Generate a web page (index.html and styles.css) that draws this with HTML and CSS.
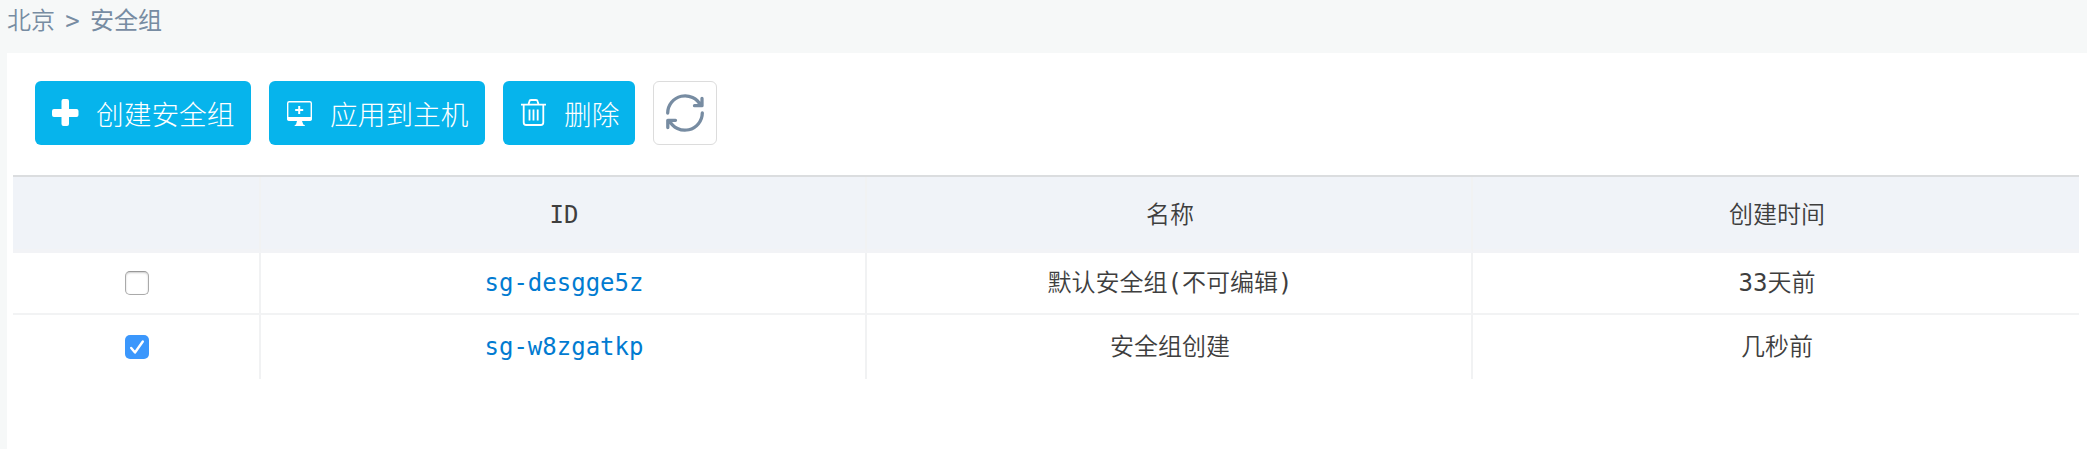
FILE: index.html
```html
<!DOCTYPE html>
<html lang="zh-CN">
<head>
<meta charset="utf-8">
<title>安全组</title>
<link rel="stylesheet" href="styles.css">
</head>
<body>
<nav class="breadcrumb"><span class="crumb">北京</span><span class="sep">&gt;</span><span class="crumb current">安全组</span></nav>
<main class="panel">
  <div class="toolbar">
    <button class="btn btn-create"><svg class="icon" viewBox="0 0 28 28" width="28" height="28"><path d="M12.500 0h3.500q2 0 2 2v8h7.500q2 0 2 2v4q0 2-2 2H18v7q0 2-2 2h-3.500q-2 0-2-2v-7H3q-2 0-2-2v-4q0-2 2-2h7.500V2q0-2 2-2z" fill="#fff"/></svg><span>创建安全组</span></button>
    <button class="btn btn-apply"><svg class="icon" viewBox="0 0 28 28" width="28" height="28"><rect x="2.700" y="2.700" width="23.600" height="18" rx="1.500" fill="none" stroke="#fff" stroke-width="1.400"/><path d="M2 18h25v2q0 2-2 2H4q-2 0-2-2zM12 22h5l1.300 3.500q1.700.2 1.700 1.500H9.500q0-1.300 1.500-1.500z" fill="#fff"/><path d="M14.200 7v8M10.200 11h8" stroke="#fff" stroke-width="2"/></svg><span>应用到主机</span></button>
    <button class="btn btn-delete"><svg class="icon" viewBox="0 0 28 28" width="28" height="28" fill="none" stroke="#fff" stroke-width="1.800"><path d="M2 5.700h25M4.700 6V23.500q0 2.500 2.500 2.500h14.600q2.500 0 2.500-2.500V6M9.500 5.500l.8-3q.3-1.500 1.700-1.500h5q1.400 0 1.700 1.500l.8 3M10.500 10.500v11M14.500 10.500v11M18.700 10.500v11"/></svg><span>删除</span></button>
    <button class="btn-refresh" aria-label="刷新"><svg viewBox="0 0 40 40" width="40" height="40" fill="none" stroke="#778ca2" stroke-width="3.300" stroke-linecap="round" stroke-linejoin="round"><path d="M2.700 20a17.400 17.400 0 0 1 33-7.500M37.300 20a17.400 17.400 0 0 1-33 7.500M37 5.500V12.700H29.500M2.800 34.500V27.300H10.500"/></svg></button>
  </div>
  <table class="grid">
    <colgroup><col class="col-check"><col class="col-id"><col class="col-name"><col class="col-time"></colgroup>
    <thead><tr><th></th><th>ID</th><th>名称</th><th>创建时间</th></tr></thead>
    <tbody>
      <tr class="first"><td><span class="check"></span></td><td><a class="link">sg-desgge5z</a></td><td>默认安全组(不可编辑)</td><td>33天前</td></tr>
      <tr class="second"><td><span class="check checked"><svg viewBox="0 0 24 24" width="24" height="24"><path d="M6.200 13l3.800 4.500L17.800 6.500" fill="none" stroke="#fff" stroke-width="2.400" stroke-linecap="round" stroke-linejoin="round"/></svg></span></td><td><a class="link">sg-w8zgatkp</a></td><td>安全组创建</td><td>几秒前</td></tr>
    </tbody>
  </table>
</main>
</body>
</html>
```
FILE: styles.css
```css
* { box-sizing: border-box; }
body {
  margin: 0;
  height: 449px;
  overflow: hidden;
  display: flex;
  flex-direction: column;
  background: #f6f8f8;
  color: #3e3e3e;
  font: 350 24px/36px "DejaVu Sans Mono", "Noto Sans CJK SC", monospace;
}
.breadcrumb {
  height: 53px;
  padding: 3px 0 0 7px;
  display: flex;
  color: #778ca2;
}
.sep { width: 35px; text-align: center; }
.current { font-weight: 400; }
.panel {
  flex: 1;
  margin-left: 7px;
  padding: 28px 8px 0 6px;
  background: #fff;
}
.toolbar { display: flex; gap: 18px; margin: 0 0 30px 22px; }
.btn {
  height: 64px;
  padding: 0 16px;
  display: flex;
  align-items: center;
  border: 0;
  border-radius: 6px;
  background: #06b4ec;
  color: #fff;
  font: 300 27.700px/40px "DejaVu Sans Mono", "Noto Sans CJK SC", monospace;
  white-space: nowrap;
}
.btn span { margin: 6px 0 0 17px; }
.btn-create, .btn-apply { width: 216px; }
.btn-delete { width: 132px; }
.icon { display: block; flex: none; }
.btn-refresh {
  width: 64px;
  height: 64px;
  padding: 0;
  display: grid;
  place-items: center;
  border: 1px solid #dcdcdc;
  border-radius: 6px;
  background: #fff;
}
.grid {
  width: 2066px;
  table-layout: fixed;
  border-collapse: separate;
  border-spacing: 0;
  border-top: 2px solid #dbdddf;
}
.col-check { width: 248px; }
.col-id, .col-name, .col-time { width: 606px; }
th, td {
  padding: 0 0 0 2px;
  text-align: center;
  vertical-align: middle;
  font-weight: 350;
}
th:not(:last-child), td:not(:last-child) { border-right: 2px solid #f1f2f3; }
th { height: 78px; padding-top: 3px; background: #f0f3f8; border-bottom: 4px solid #f2f3f6; }
thead th { height: 76px; }
.first td { height: 62px; border-bottom: 2px solid #f2f3f4; }
.second td { height: 64px; }
.link { color: #017bd1; }
.check {
  display: block;
  width: 24px;
  height: 24px;
  margin: 0 auto;
  border: 1px solid #aaa;
  border-top-color: #999;
  border-radius: 5px;
  background: #fff;
  box-shadow: inset 0 1px 2px #ccc;
}
.checked { border: 0; background: #3b97fc; box-shadow: none; }
.checked svg { display: block; }
```
